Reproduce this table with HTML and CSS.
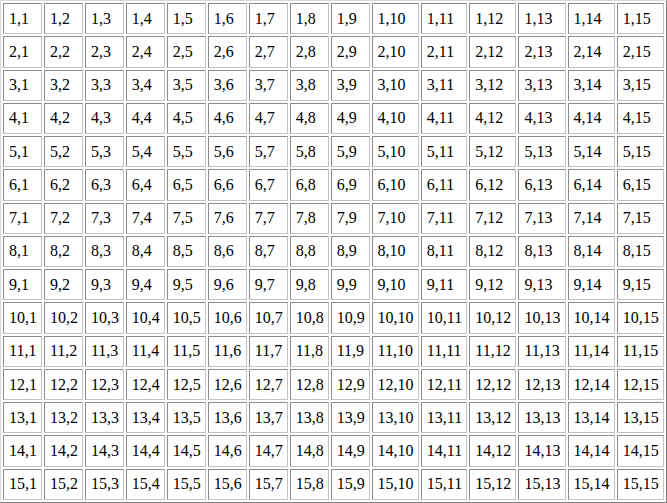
FILE: index.html
```html
<!DOCTYPE html>
<html>
<head>
<meta charset="utf-8">
<title>Grid</title>
<link rel="stylesheet" href="styles.css">
</head>
<body>
<table class="grid">
<tr><td>1,1</td><td>1,2</td><td>1,3</td><td>1,4</td><td>1,5</td><td>1,6</td><td>1,7</td><td>1,8</td><td>1,9</td><td>1,10</td><td>1,11</td><td>1,12</td><td>1,13</td><td>1,14</td><td>1,15</td></tr>
<tr><td>2,1</td><td>2,2</td><td>2,3</td><td>2,4</td><td>2,5</td><td>2,6</td><td>2,7</td><td>2,8</td><td>2,9</td><td>2,10</td><td>2,11</td><td>2,12</td><td>2,13</td><td>2,14</td><td>2,15</td></tr>
<tr><td>3,1</td><td>3,2</td><td>3,3</td><td>3,4</td><td>3,5</td><td>3,6</td><td>3,7</td><td>3,8</td><td>3,9</td><td>3,10</td><td>3,11</td><td>3,12</td><td>3,13</td><td>3,14</td><td>3,15</td></tr>
<tr><td>4,1</td><td>4,2</td><td>4,3</td><td>4,4</td><td>4,5</td><td>4,6</td><td>4,7</td><td>4,8</td><td>4,9</td><td>4,10</td><td>4,11</td><td>4,12</td><td>4,13</td><td>4,14</td><td>4,15</td></tr>
<tr><td>5,1</td><td>5,2</td><td>5,3</td><td>5,4</td><td>5,5</td><td>5,6</td><td>5,7</td><td>5,8</td><td>5,9</td><td>5,10</td><td>5,11</td><td>5,12</td><td>5,13</td><td>5,14</td><td>5,15</td></tr>
<tr><td>6,1</td><td>6,2</td><td>6,3</td><td>6,4</td><td>6,5</td><td>6,6</td><td>6,7</td><td>6,8</td><td>6,9</td><td>6,10</td><td>6,11</td><td>6,12</td><td>6,13</td><td>6,14</td><td>6,15</td></tr>
<tr><td>7,1</td><td>7,2</td><td>7,3</td><td>7,4</td><td>7,5</td><td>7,6</td><td>7,7</td><td>7,8</td><td>7,9</td><td>7,10</td><td>7,11</td><td>7,12</td><td>7,13</td><td>7,14</td><td>7,15</td></tr>
<tr><td>8,1</td><td>8,2</td><td>8,3</td><td>8,4</td><td>8,5</td><td>8,6</td><td>8,7</td><td>8,8</td><td>8,9</td><td>8,10</td><td>8,11</td><td>8,12</td><td>8,13</td><td>8,14</td><td>8,15</td></tr>
<tr><td>9,1</td><td>9,2</td><td>9,3</td><td>9,4</td><td>9,5</td><td>9,6</td><td>9,7</td><td>9,8</td><td>9,9</td><td>9,10</td><td>9,11</td><td>9,12</td><td>9,13</td><td>9,14</td><td>9,15</td></tr>
<tr><td>10,1</td><td>10,2</td><td>10,3</td><td>10,4</td><td>10,5</td><td>10,6</td><td>10,7</td><td>10,8</td><td>10,9</td><td>10,10</td><td>10,11</td><td>10,12</td><td>10,13</td><td>10,14</td><td>10,15</td></tr>
<tr><td>11,1</td><td>11,2</td><td>11,3</td><td>11,4</td><td>11,5</td><td>11,6</td><td>11,7</td><td>11,8</td><td>11,9</td><td>11,10</td><td>11,11</td><td>11,12</td><td>11,13</td><td>11,14</td><td>11,15</td></tr>
<tr><td>12,1</td><td>12,2</td><td>12,3</td><td>12,4</td><td>12,5</td><td>12,6</td><td>12,7</td><td>12,8</td><td>12,9</td><td>12,10</td><td>12,11</td><td>12,12</td><td>12,13</td><td>12,14</td><td>12,15</td></tr>
<tr><td>13,1</td><td>13,2</td><td>13,3</td><td>13,4</td><td>13,5</td><td>13,6</td><td>13,7</td><td>13,8</td><td>13,9</td><td>13,10</td><td>13,11</td><td>13,12</td><td>13,13</td><td>13,14</td><td>13,15</td></tr>
<tr><td>14,1</td><td>14,2</td><td>14,3</td><td>14,4</td><td>14,5</td><td>14,6</td><td>14,7</td><td>14,8</td><td>14,9</td><td>14,10</td><td>14,11</td><td>14,12</td><td>14,13</td><td>14,14</td><td>14,15</td></tr>
<tr><td>15,1</td><td>15,2</td><td>15,3</td><td>15,4</td><td>15,5</td><td>15,6</td><td>15,7</td><td>15,8</td><td>15,9</td><td>15,10</td><td>15,11</td><td>15,12</td><td>15,13</td><td>15,14</td><td>15,15</td></tr>
</table>
</body>
</html>
```

FILE: styles.css
```css
html, body {
  margin: 0;
  height: 100%;
  background: #ffffff;
}

.grid {
  width: 100%;
  height: 100%;
  border: 1px solid;
  border-color: #d8d8d8 #808080 #808080 #d8d8d8;
  border-spacing: 2px;
  font-family: "Liberation Serif", "Times New Roman", serif;
  font-size: 16px;
  color: #000000;
}

.grid td {
  border: 1px solid;
  border-color: #8c8c8c #c4c4c4 #c4c4c4 #8c8c8c;
  padding: 4px 3px 4px 5px;
  vertical-align: middle;
  text-align: left;
  white-space: nowrap;
}
```
